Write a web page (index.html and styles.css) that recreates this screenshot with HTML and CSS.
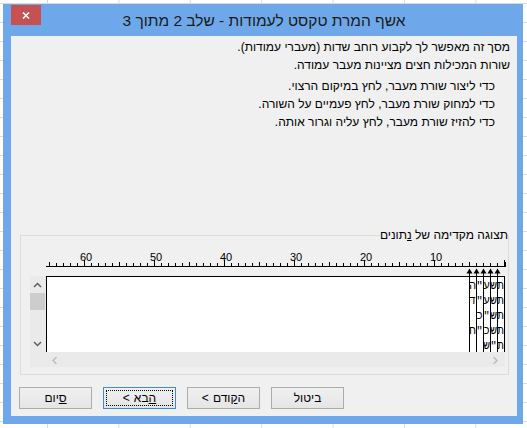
FILE: index.html
```html
<!DOCTYPE html>
<html lang="he">
<head>
<meta charset="utf-8">
<title>אשף המרת טקסט לעמודות</title>
<link rel="stylesheet" href="styles.css">
</head>
<body>
<div class="window">
  <div class="titlebar">
    <div class="close">
      <svg width="8" height="7" viewBox="0 0 8 7"><path d="M1 0.5 L7 6.5 M7 0.5 L1 6.5" stroke="#fff" stroke-width="1.6" fill="none"/></svg>
    </div>
    <div class="title" dir="rtl">אשף המרת טקסט לעמודות - שלב 2 מתוך 3</div>
    <div></div>
  </div>
  <div class="client" dir="rtl">
    <div class="intro">
      <p>מסך זה מאפשר לך לקבוע רוחב שדות (מעברי עמודות).</p>
      <p>שורות המכילות חצים מציינות מעבר עמודה.</p>
    </div>
    <div class="howto">
      <p>כדי ליצור שורת מעבר, לחץ במיקום הרצוי.</p>
      <p>כדי למחוק שורת מעבר, לחץ פעמיים על השורה.</p>
      <p>כדי להזיז שורת מעבר, לחץ עליה וגרור אותה.</p>
    </div>
    <fieldset class="group">
      <legend>תצוגה מקדימה של <u>נ</u>תונים</legend>
      <div class="preview" dir="ltr">
        <svg class="ruler" width="478" height="26" viewBox="0 0 478 26">
          <rect x="16" y="16" width="460" height="1" fill="#000"/>
          <line x1="19" y1="14.5" x2="475" y2="14.5" stroke="#000" stroke-width="3" stroke-dasharray="1 6"/>
          <line x1="19" y1="14" x2="475" y2="14" stroke="#000" stroke-width="4" stroke-dasharray="1 34"/>
          <line x1="54" y1="13" x2="475" y2="13" stroke="#000" stroke-width="6" stroke-dasharray="1 69"/>
          <rect x="474" y="12" width="2" height="4" fill="#000"/>
          <g class="nums" text-anchor="middle">
            <text x="406" y="10.5">10</text>
            <text x="336" y="10.5">20</text>
            <text x="266" y="10.5">30</text>
            <text x="196" y="10.5">40</text>
            <text x="126" y="10.5">50</text>
            <text x="56" y="10.5">60</text>
          </g>
        </svg>
        <div class="data">
          <div class="vscroll">
            <svg width="16" height="76" viewBox="0 0 16 76">
              <polyline points="4,11 7.5,7.5 11,11" fill="none" stroke="#606060" stroke-width="1.5"/>
              <rect x="0" y="17" width="15" height="17" fill="#cdcdcd"/>
              <polyline points="4,66 7.5,69.5 11,66" fill="none" stroke="#606060" stroke-width="1.5"/>
            </svg>
          </div>
          <div class="box" dir="rtl">
            <div class="row"><span>ת</span><span>ש</span><span>ע</span><span>"</span><span>ה</span></div>
            <div class="row"><span>ת</span><span>ש</span><span>ע</span><span>"</span><span>ד</span></div>
            <div class="row"><span>ת</span><span>ש</span><span>"</span><span>כ</span></div>
            <div class="row"><span>ת</span><span>ש</span><span>כ</span><span>"</span><span>ח</span></div>
            <div class="row"><span>ת</span><span>"</span><span>ש</span></div>
          </div>
        </div>
        <div class="hscroll">
          <div class="corner"></div>
          <div class="htrack">
            <svg width="8" height="8" viewBox="0 0 8 8"><polyline points="5.5,1 2,4.5 5.5,8" fill="none" stroke="#bdbdbd" stroke-width="1.5"/></svg>
            <svg width="8" height="8" viewBox="0 0 8 8"><polyline points="2.5,1 6,4.5 2.5,8" fill="none" stroke="#bdbdbd" stroke-width="1.5"/></svg>
          </div>
        </div>
        <svg class="breaks" width="478" height="102" viewBox="0 0 478 102">
          <g fill="#000">
            <rect x="439" y="19" width="1" height="83"/>
            <rect x="446" y="19" width="1" height="83"/>
            <rect x="453" y="19" width="1" height="83"/>
            <rect x="460" y="19" width="1" height="83"/>
            <rect x="467" y="19" width="1" height="83"/>
            <polygon points="439.5,18.5 436.5,23.5 442.5,23.5"/>
            <polygon points="446.5,18.5 443.5,23.5 449.5,23.5"/>
            <polygon points="453.5,18.5 450.5,23.5 456.5,23.5"/>
            <polygon points="460.5,18.5 457.5,23.5 463.5,23.5"/>
            <polygon points="467.5,18.5 464.5,23.5 470.5,23.5"/>
          </g>
        </svg>
      </div>
    </fieldset>
    <div class="buttons" dir="ltr">
      <button class="btn" dir="rtl"><span><u>ס</u>יום</span></button>
      <button class="btn focused" dir="ltr"><span class="arr" dir="ltr">&lt;</span><span dir="rtl"><u>ה</u>בא</span></button>
      <button class="btn" dir="ltr"><span class="arr" dir="ltr">&lt;</span><span dir="rtl">ה<u>ק</u>ודם</span></button>
      <button class="btn" dir="rtl"><span>ביטול</span></button>
    </div>
  </div>
</div>
</body>
</html>
```

FILE: styles.css
```css
* { box-sizing: border-box; }

html, body {
  margin: 0;
  padding: 0;
}

body {
  width: 527px;
  height: 428px;
  overflow: hidden;
  padding: 4px 0 0 3px;
  background-color: #ffffff;
  background-image:
    linear-gradient(to right, #dadada 1px, transparent 1px),
    linear-gradient(to bottom, #dadada 1px, transparent 1px);
  background-size: 71.4px 19px;
  background-position: 47px 3px;
  font-family: "Liberation Sans", Arial, sans-serif;
  color: #000;
}

.window {
  width: 520px;
  height: 420px;
  background: #6fa8ea;
  padding: 0 6px 8px 8px;
  display: flex;
  flex-direction: column;
}

.titlebar {
  height: 32px;
  flex: none;
  display: grid;
  grid-template-columns: 30px 1fr 30px;
  align-items: center;
}

.close {
  width: 30px;
  height: 20px;
  align-self: start;
  margin-top: 1px;
  background: #c75050;
  display: flex;
  align-items: center;
  justify-content: center;
}

.close svg { display: block; }

.title {
  text-align: center;
  font-size: 15.5px;
  color: #1a1a1a;
  padding-top: 1px;
}

.client {
  flex: 1;
  background: #f0f0f0;
  display: flex;
  flex-direction: column;
  font-size: 12px;
  line-height: 18px;
}

.client p { margin: 0; }

.intro {
  padding: 2px 7px 0 0;
}

.howto {
  margin-top: 3px;
  padding-right: 22px;
}

.group {
  margin: 97px 8px 0 9px;
  padding: 0 0 7px 7px;
  border: 1px solid #dcdcdc;
  min-width: 0;
}

.group legend {
  padding: 0;
  font-size: 12px;
  line-height: 14px;
}

.preview {
  position: relative;
  margin-top: 8px;
  width: 478px;
  display: flex;
  flex-direction: column;
}

.ruler { display: block; }

.nums {
  font-family: "Liberation Sans", Arial, sans-serif;
  font-size: 11px;
  fill: #000;
}

.data {
  display: flex;
  height: 76px;
}

.vscroll {
  width: 16px;
  background: #eaeaea;
}

.vscroll svg { display: block; }

.box {
  width: 459px;
  background: #fff;
  border-top: 1px solid #000;
  border-left: 1px solid #000;
  border-right: 1px solid #000;
  padding-top: 2px;
}

.row {
  display: flex;
  height: 15px;
  font-family: "Liberation Mono", "DejaVu Sans Mono", monospace;
  font-size: 11px;
  line-height: 15px;
}

.row span {
  width: 7px;
  text-align: center;
}

.hscroll {
  display: flex;
  height: 15px;
}

.corner {
  width: 16px;
  background: #eaeaea;
}

.htrack {
  width: 459px;
  background: #eaeaea;
  display: flex;
  align-items: center;
  justify-content: space-between;
  padding: 0 6px 0 5px;
}

.htrack svg { display: block; }

.breaks {
  position: absolute;
  left: 0;
  top: 0;
  pointer-events: none;
}

.buttons {
  margin-top: 12px;
  padding-left: 8px;
  display: flex;
  direction: ltr;
  gap: 11px;
}

.btn {
  width: 73px;
  height: 22px;
  margin: 0;
  padding: 0;
  border: 1px solid #acacac;
  background: linear-gradient(#f0f0f0, #e5e5e5);
  font-family: "Liberation Sans", Arial, sans-serif;
  font-size: 12px;
  color: #000;
  display: flex;
  align-items: center;
  justify-content: center;
  gap: 4px;
}

.btn.focused {
  border-color: #3f8ad8;
  outline: 1px dotted #000;
  outline-offset: -4px;
}
```
